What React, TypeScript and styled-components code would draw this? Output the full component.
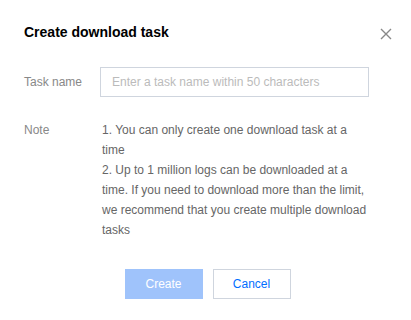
import styled, { createGlobalStyle } from "styled-components";

const GlobalStyle = createGlobalStyle`
    body {
        margin: 0;
        background: #fff;
        font-family: "Liberation Sans", Arial, sans-serif;
    }
`;

export default function App() {
    return (
        <>
            <GlobalStyle />
            <StyledDialog>
                <StyledHeader>
                    <StyledTitle>Create download task</StyledTitle>
                    <StyledClose aria-label="close">
                        <svg width="12" height="12" viewBox="0 0 12 12">
                            <path d="M1 1 L11 11 M11 1 L1 11" stroke="#888" strokeWidth="1.4" fill="none" />
                        </svg>
                    </StyledClose>
                </StyledHeader>
                <StyledForm>
                    <StyledRow $center>
                        <StyledLabel>Task name</StyledLabel>
                        <StyledInput placeholder="Enter a task name within 50 characters" />
                    </StyledRow>
                    <StyledRow>
                        <StyledLabel>Note</StyledLabel>
                        <StyledNote>
                            <div>1. You can only create one download task at a time</div>
                            <div>2. Up to 1 million logs can be downloaded at a time. If you need to download more than the limit, we recommend that you create multiple download tasks</div>
                        </StyledNote>
                    </StyledRow>
                </StyledForm>
                <StyledFooter>
                    <StyledButton $primary disabled>Create</StyledButton>
                    <StyledButton>Cancel</StyledButton>
                </StyledFooter>
            </StyledDialog>
        </>
    )
};

const StyledDialog = styled.div`
    width: 411px;
    height: 320px;
    box-sizing: border-box;
    padding: 22px 19px 0 24px;
`;

const StyledHeader = styled.div`
    display: flex;
    justify-content: space-between;
    align-items: center;
    height: 20px;
`;

const StyledTitle = styled.div`
    font-size: 14px;
    font-weight: bold;
    color: #000;
    line-height: 20px;
`;

const StyledClose = styled.button`
    border: none;
    background: none;
    padding: 0;
    margin-top: 4px;
    width: 12px;
    height: 12px;
    display: flex;
    cursor: pointer;
`;

const StyledForm = styled.div`
    margin-top: 25px;
    display: flex;
    flex-direction: column;
    gap: 23px;
    padding-right: 23px;
`;

const StyledRow = styled.div<{ $center?: boolean }>`
    display: flex;
    align-items: ${props => props.$center ? "center" : "flex-start"};
`;

const StyledLabel = styled.div`
    width: 76px;
    flex-shrink: 0;
    font-size: 12px;
    line-height: 20px;
    color: #888;
`;

const StyledInput = styled.input`
    flex-grow: 1;
    height: 30px;
    box-sizing: border-box;
    border: 1px solid #cfd5de;
    padding: 0 11px;
    font-family: inherit;
    font-size: 12px;
    color: #333;
    outline: none;
    &::placeholder {
        color: #bbb;
    }
`;

const StyledNote = styled.div`
    flex-grow: 1;
    padding-left: 2px;
    font-size: 12px;
    line-height: 20px;
    color: #666;
`;

const StyledFooter = styled.div`
    margin-top: 29px;
    display: flex;
    justify-content: center;
    gap: 10px;
    padding-right: 1px;
`;

const StyledButton = styled.button<{ $primary?: boolean }>`
    width: 78px;
    height: 30px;
    box-sizing: border-box;
    font-family: inherit;
    font-size: 12px;
    border: 1px solid ${props => props.$primary ? "#9fc3fb" : "#cfd5de"};
    background: ${props => props.$primary ? "#9fc3fb" : "#fff"};
    color: ${props => props.$primary ? "#fff" : "#006eff"};
    cursor: pointer;
`;
